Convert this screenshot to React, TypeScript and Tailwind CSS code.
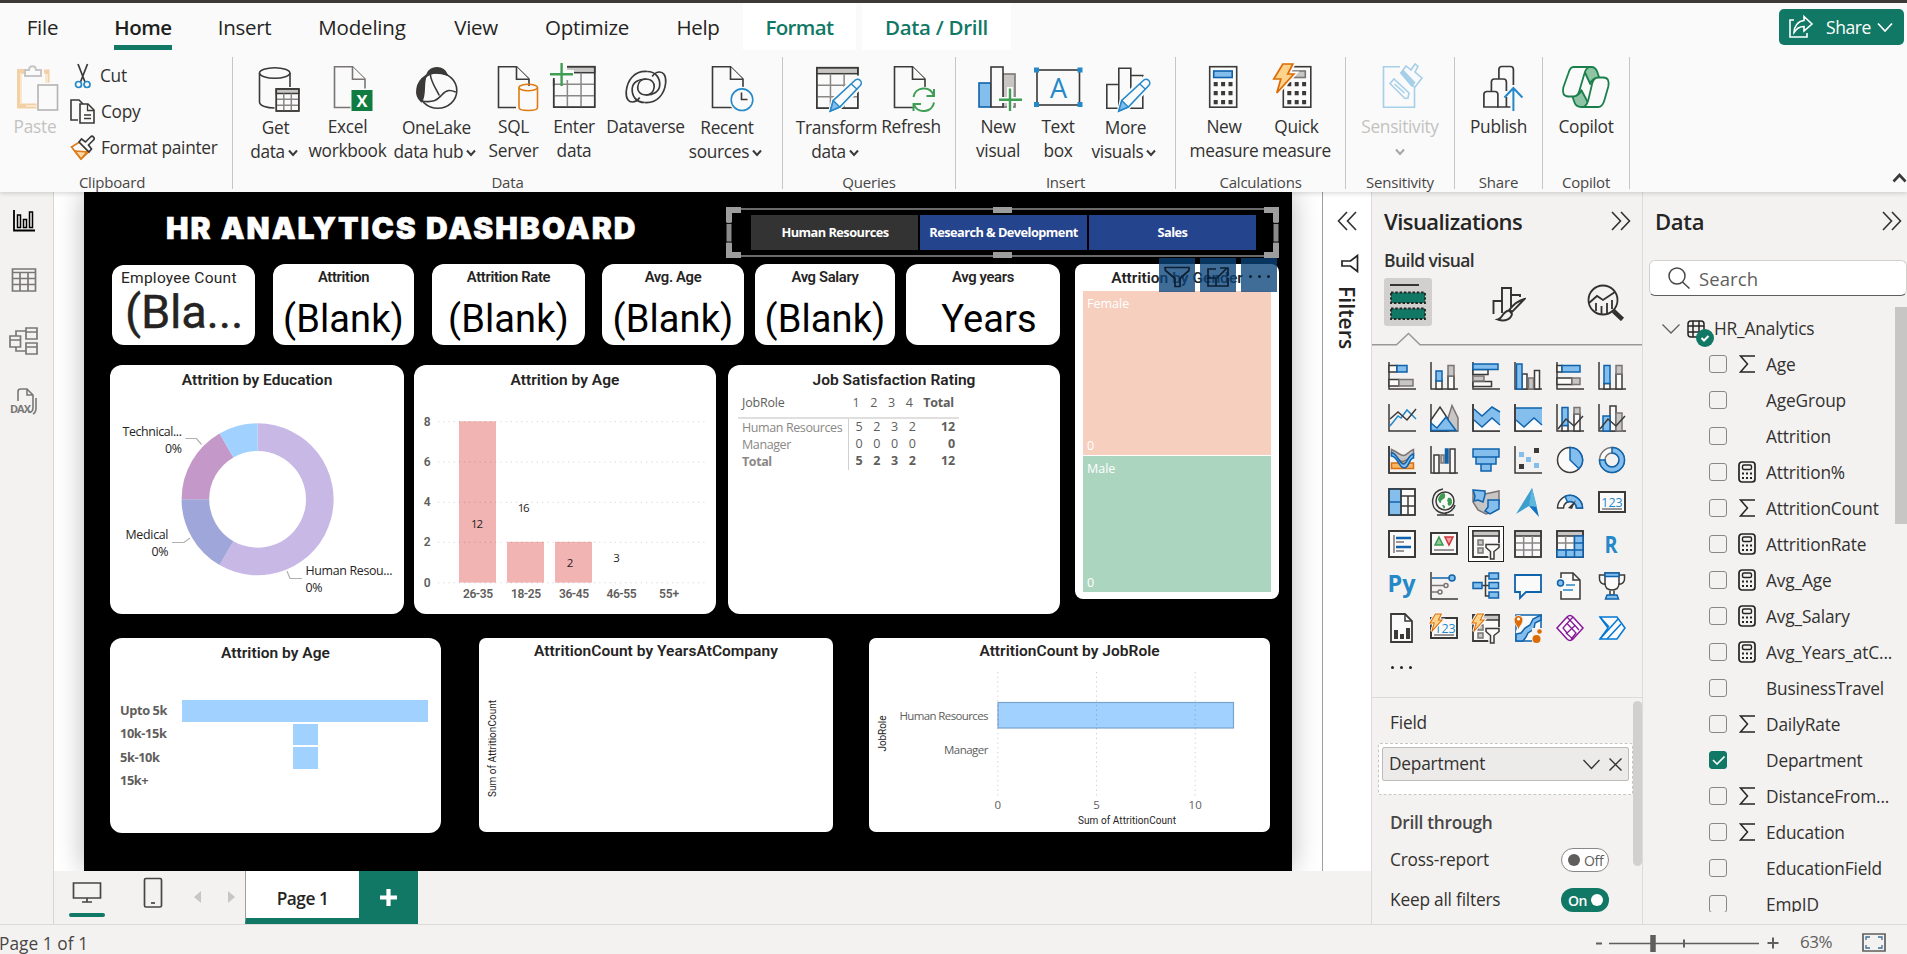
import React from "react";

const K = "#3b3a39";
const G = "#7a7574";
const GF = "#c8c6c4";
const B = "#0f62ac";
const BF = "#83beec";
const GR = "#3f9e54";

/* ---------- shared shapes ---------- */

const Chev = ({ s = "#3b3a39", sw = 2 }: { s?: string; sw?: number }) => (
  <svg width="10" height="8" viewBox="0 0 10 8" fill="none" stroke={s} strokeWidth={sw} className="inline-block">
    <path d="M1 1.5l4 4.5 4-4.5" />
  </svg>
);

const DoubleChev = ({ left }: { left?: boolean }) => (
  <svg width="20" height="20" viewBox="0 0 20 20" fill="none" stroke="#323130" strokeWidth="1.6" className={left ? "rotate-180" : ""}>
    <path d="M1 1l8.5 9L1 19M10 1l8.5 9L10 19" />
  </svg>
);

const DocShape = ({ x, y = 66.7, s = K }: { x: number; y?: number; s?: string }) => (
  <g fill="#fafafa" stroke={s} strokeWidth="1.6">
    <path d={`M${x} ${y}h18l12.5 12.5v28.3h-30.5z`} />
    <path d={`M${x + 18} ${y}v12.5h12.5`} />
  </g>
);

const Grid3 = ({ x, y, w, h, hd, s = "#8a8886" }: { x: number; y: number; w: number; h: number; hd: number; s?: string }) => (
  <g fill="none" strokeWidth="1.5">
    <rect x={x} y={y} width={w} height={h} fill="#fafafa" stroke={K} />
    <rect x={x} y={y} width={w} height={hd} fill={GF} stroke={K} />
    <path
      stroke={s}
      d={`M${x + w / 3} ${y + hd}V${y + h}M${x + (2 * w) / 3} ${y + hd}V${y + h}M${x} ${y + hd + (h - hd) / 3}h${w}M${x} ${y + hd + ((h - hd) * 2) / 3}h${w}`}
    />
    <rect x={x} y={y} width={w} height={h} stroke={K} />
  </g>
);

const Pencil = ({ x }: { x: number }) => (
  <g transform={`translate(${x} 111)`}>
    <path d="M0 0l3-11L24-32a4.3 4.3 0 0 1 7 7L10-4z" fill="#fafafa" stroke="#fafafa" strokeWidth="4" />
    <path d="M0 0l3-10.500L24.500-30.500a3.600 3.600 0 0 1 5.500 5L9.500-4z" fill="#fafafa" stroke="#2488c9" strokeWidth="1.6" />
    <path d="M0 0l3-10.500 6.500 6.500z" fill={BF} stroke="#2488c9" strokeWidth="1.4" />
    <path d="M21-27l6 5.500" stroke="#2488c9" strokeWidth="1.4" />
  </g>
);

const Ico = ({ c, children }: { c: number; children: React.ReactNode }) => (
  <svg width="56" height="52" viewBox={`${c - 28} 61 56 52`} fill="none" strokeWidth="1.6" className="shrink-0">
    {children}
  </svg>
);

/* ---------- ribbon icons ---------- */

const GetDataIcon = (
  <Ico c={275.5}>
    <path d="M259 73v29c0 4 8 6 15 6M289.500 73v14" stroke={K} />
    <ellipse cx="274.2" cy="73" rx="15.2" ry="5.3" stroke={K} />
    <Grid3 x={275.8} y={89} w={22.5} h={22} hd={4.5} />
  </Ico>
);
const ExcelIcon = (
  <Ico c={347.5}>
    <DocShape x={334} s={G} />
    <rect x="350" y="88.500" width="24" height="24" fill="#fafafa" />
    <rect x="351" y="90" width="21" height="21" fill="#107c41" />
    <text x="361.5" y="106.500" textAnchor="middle" fill="#fff" fontSize="16.500" fontWeight="700" fontFamily="Open Sans, sans-serif">X</text>
  </Ico>
);
const OneLakeIcon = (
  <Ico c={436.7}>
    <ellipse cx="437.500" cy="90.500" rx="19" ry="17.800" stroke={K} />
    <path d="M427 74c3-8 16-9 20 1-7-2.500-14-2.500-20-1z" fill={K} stroke={K} />
    <path d="M426 75.500c-11 7-12 20-5 26 5-6 1-18 5-26z" fill={K} stroke={K} />
    <path d="M430 74.500c1 8 5 13 9 21M420.500 101c14 2 16-1 21-6 5-6 9-5 14-3" stroke={K} />
  </Ico>
);
const SqlIcon = (
  <Ico c={514}>
    <DocShape x={498.5} />
    <path d="M516 86h23v27h-23z" fill="#fafafa" />
    <path d="M519 87.500v20c0 4 18.500 4 18.500 0v-20" stroke="#e07b12" />
    <ellipse cx="528.2" cy="87.500" rx="9.300" ry="3.200" stroke="#e07b12" />
  </Ico>
);
const EnterIcon = (
  <Ico c={574}>
    <Grid3 x={553.7} y={66.7} w={41} h={40.5} hd={6} />
    <path d="M550 61h17v17h-17zM561 70h13v10h-13z" fill="#fafafa" />
    <path d="M561.600 63v23M550 74.300h23" stroke={GR} strokeWidth="2.400" />
    <path d="M553.700 80v6" stroke={K} />
  </Ico>
);
const DataverseIcon = (
  <Ico c={645.3}>
    <g stroke={K} strokeWidth="1.700">
      <path d="M644 102.500c13 1 20-9 21-20 .5-8-3-10.500-6-10.500-3 0-5.500 1.500-7.500 4.500" />
      <path d="M646.500 71.500c-13-1-20 9-21 20-.5 8 3 10.500 6 10.500 3 0 5.500-1.500 7.500-4.500" />
      <path d="M646.500 71.500c9 0 13 7 12.500 14-.5 6-6 9.500-13.500 9.500-6 0-9-4-8.500-8 .5-5 4-8 8.500-8" />
      <path d="M644 102.500c-9 0-13-7-12.500-14 .5-6 6-9.500 13.500-9.500 6 0 9 4 8.500 8-.5 5-4 8-8.500 8" />
    </g>
  </Ico>
);
const RecentIcon = (
  <Ico c={727}>
    <DocShape x={712.5} />
    <circle cx="742" cy="99.700" r="13" fill="#fafafa" />
    <circle cx="742" cy="99.700" r="10.800" stroke="#2488c9" fill="#fafafa" />
    <path d="M741.500 92.500v7h6" stroke={K} />
  </Ico>
);
const TransformIcon = (
  <Ico c={836.7}>
    <Grid3 x={816.5} y={67.7} w={41} h={40.5} hd={6} />
    <Pencil x={830} />
  </Ico>
);
const RefreshIcon = (
  <Ico c={911}>
    <DocShape x={894.5} />
    <circle cx="923.700" cy="99.700" r="13" fill="#fafafa" />
    <g stroke={GR} strokeWidth="2">
      <path d="M913.500 97c1.500-10 16-12 20-2M934 89v7h-7.500M934 102.500c-1.500 10-16 12-20 2M913.500 111v-7h7.500" />
    </g>
  </Ico>
);
const NewVisualIcon = (
  <Ico c={998}>
    <rect x="979" y="83" width="12" height="24" fill={BF} stroke={B} />
    <rect x="1003" y="74" width="12" height="33" fill={GF} stroke={G} />
    <rect x="991" y="67" width="12" height="40" fill="#fafafa" stroke={K} />
    <path d="M1007 87h6v10h6v6h-6v10h-6v-10h-8v-6h8z" fill="#fafafa" />
    <path d="M1010 88.500v22.500M999 99.800h23" stroke={GR} strokeWidth="2.400" />
  </Ico>
);
const TextBoxIcon = (
  <Ico c={1058}>
    <rect x="1037" y="70" width="42.500" height="35" stroke={K} />
    <g fill="#2488c9">
      <path d="M1034 67.500h5v5h-5zM1077.500 67.500h5v5h-5zM1034 102h5v5h-5zM1077.500 102h5v5h-5z" />
    </g>
    <text x="1058.500" y="97.500" textAnchor="middle" fill="#2488c9" fontSize="27" fontFamily="Open Sans, sans-serif">A</text>
  </Ico>
);
const MoreVisualsIcon = (
  <Ico c={1125.7}>
    <path d="M1106.500 84.500h12v23.700h-12zM1130.500 75.500h12v32.700h-12zM1118.500 68.200h12v40h-12z" fill="#fafafa" stroke={K} />
    <Pencil x={1118.5} />
  </Ico>
);
const Keys = ({ x }: { x: number }) => (
  <path
    fill={K}
    stroke="none"
    d={[82, 91, 100].map((y) => [0, 7.4, 14.8].map((d) => `M${x + d} ${y}h4v4.2h-4z`).join("")).join("")}
  />
);
const NewMeasureIcon = (
  <Ico c={1224.3}>
    <rect x="1210" y="66.700" width="27" height="40.500" stroke={K} />
    <rect x="1214" y="71" width="18.500" height="6.500" fill={BF} stroke={B} />
    <Keys x={1214} />
  </Ico>
);
const Bolt = ({ x, y, k = 1 }: { x: number; y: number; k?: number }) => (
  <g transform={`translate(${x} ${y}) scale(${k})`}>
    <path d="M9 0h10l-5 10h6L3 29l4-14H0z" fill="#fafafa" stroke="#fafafa" strokeWidth="5" />
    <path d="M9 0h10l-5 10h6L3 29l4-14H0z" fill="#fcd38a" stroke="#dd6b05" strokeWidth="1.700" />
  </g>
);
const QuickMeasureIcon = (
  <Ico c={1296.7}>
    <rect x="1283" y="66.700" width="27.500" height="40.500" stroke={K} />
    <rect x="1290" y="71" width="15" height="6.500" fill={GF} stroke={G} />
    <Keys x={1287} />
    <Bolt x={1273.5} y={64} />
  </Ico>
);
const SensitivityIcon = (
  <Ico c={1400}>
    <g stroke="#a6cfe8">
      <path d="M1400 66.700h-16.500v40.500h31v-20" />
      <path d="M1390 83.500l4-4.500 15 14-1 5-3 .5zM1394.500 84l10 9" />
      <path d="M1401 73l5-7 5 4 4-6 3 2.500-3 5.500 7 6-7 9-4-2z" fill="#fafafa" />
      <path d="M1401 73l2-2.500 11.500 12-2.500 3z" fill="#a6cfe8" />
    </g>
  </Ico>
);
const PublishIcon = (
  <Ico c={1498.6}>
    <g stroke={K} strokeWidth="1.700">
      <path d="M1486 91.500h8.500a3 3 0 0 1 3 3V107H1483.500V94.500a3 3 0 0 1 2.500-3z" />
      <path d="M1491 91V82a3 3 0 0 1 3-3h9a3 3 0 0 1 3 3v9M1498.500 79V69.500a3 3 0 0 1 3-3h8.500a3 3 0 0 1 3 3V85M1497 107h13M1506 97v10" />
    </g>
    <path d="M1513 111V89M1504 97.500l9-9.500 9 9.500" stroke="#2488c9" strokeWidth="2" />
  </Ico>
);
const CopilotIcon = (
  <Ico c={1585.7}>
    <g stroke="#1a7f4b" strokeWidth="1.800" strokeLinejoin="round">
      <path d="M1582 67h9c4 0 5 2 6 5l2 6c-6 0-8 2-9 6z" fill="#8ec3a4" />
      <path d="M1590 107h-9c-4 0-6-2-7-5l-2-6c6 0 8-2 9-6z" fill="#8ec3a4" />
      <path d="M1573 67h16c-3 1-4 3-5 7l-5 17c-1 4-3 5.500-6 5.500h-5c-5 0-6-4-5-9l5-14c1.500-5 3-6.500 5-6.500z" fill="#fafafa" />
      <path d="M1598 107h-15c3-1 4-3 5-7l4-17c1-4 3-5.500 6-5.500h5c5 0 6 4 5 9l-4 14c-1.500 5-3 6.500-6 6.500z" fill="#fafafa" />
    </g>
  </Ico>
);

/* ---------- ribbon ---------- */

type Item = { icon: React.ReactNode; a: string; b?: string; chev?: boolean; w: string; dim?: boolean };

const RibbonItem = ({ it }: { it: Item }) => (
  <div className={`flex shrink-0 flex-col items-center ${it.w}`}>
    {it.icon}
    <div className={`text-center text-[17.3px] leading-[24px] tracking-[-0.3px] whitespace-nowrap ${it.chev && it.b ? "mt-[3px]" : "mt-[2px]"} ${it.dim ? "text-[#c4c2c0]" : "text-[#323130]"}`}>
      <div>{it.a}</div>
      <div className={it.chev && it.b ? "-ml-[3px]" : ""}>
        {it.b}
        {it.chev && (
          <span className={it.b ? "ml-[3px]" : ""}>
            <Chev s={it.dim ? "#a8a6a4" : K} />
          </span>
        )}
      </div>
    </div>
  </div>
);

const GroupLabel = ({ children, cls = "" }: { children: React.ReactNode; cls?: string }) => (
  <div className={`h-[20px] shrink-0 text-center text-[15px] leading-[26px] tracking-[-0.2px] text-[#484644] ${cls}`}>{children}</div>
);

const Group = ({ w, pad, label, items }: { w: string; pad: string; label: string; items: Item[] }) => (
  <div className={`flex h-[132px] shrink-0 flex-col border-r border-[#c8c6c4] ${w}`}>
    <div className={`flex h-[112px] shrink-0 pt-1 ${pad}`}>
      {items.map((it, i) => (
        <RibbonItem key={i} it={it} />
      ))}
    </div>
    <GroupLabel>{label}</GroupLabel>
  </div>
);

const Ribbon = () => (
  <div className="flex pt-[7px]">
    <div className="flex h-[132px] w-[233px] shrink-0 flex-col border-r border-[#c8c6c4]">
      <div className="flex h-[112px] shrink-0">
        <div className="flex w-[70px] flex-col items-center pt-1">
          <svg width="56" height="52" viewBox="8 61 56 52" fill="none" strokeWidth="2">
            <path d="M26 71.500h-5.500v34.500h17" stroke="#f3cfa6" strokeWidth="5" />
            <path d="M45 71.500h3.500v11" stroke="#f3cfa6" strokeWidth="4" />
            <path d="M27 106h10M22 73v31M48 74v8" stroke="#fdeed3" strokeWidth="1.500" />
            <path d="M27 77v-6h4c0-5 7-5 7 0h5v6z" stroke="#c8c6c4" fill="#fafafa" transform="translate(-1 -1)" />
            <rect x="38" y="84" width="21.500" height="27" fill="#fafafa" />
            <rect x="39" y="85" width="19.500" height="25" stroke="#b5b3b1" fill="#fafafa" strokeWidth="1.600" />
          </svg>
          <div className="mt-[2px] text-[17.3px] leading-[24px] tracking-[-0.25px] text-[#c4c2c0]">Paste</div>
        </div>
        <div className="flex flex-col pt-[1px] text-[17.3px] tracking-[-0.3px] text-[#323130]">
          <div className="flex h-[36px] items-center gap-[6px]">
            <svg width="24" height="26" viewBox="0 0 24 26" fill="none" strokeWidth="1.700">
              <path d="M8 1l7 18M17.500 1l-7 18" stroke={K} />
              <circle cx="8.500" cy="21.500" r="3" stroke="#2488c9" />
              <circle cx="17" cy="21.500" r="3" stroke="#2488c9" />
            </svg>
            Cut
          </div>
          <div className="flex h-[36px] items-center gap-[6px]">
            <svg width="25" height="26" viewBox="0 0 25 26" fill="none" stroke={K} strokeWidth="1.600">
              <path d="M8 21H1V1h8l4 4" />
              <path d="M10 5h8l6 6v13H10z" fill="#fafafa" />
              <path d="M17.500 5v6.500H24M14 16h7M14 19.500h7" strokeWidth="1.300" />
            </svg>
            Copy
          </div>
          <div className="flex h-[36px] items-center gap-[6px]">
            <svg width="25" height="26" viewBox="0 0 25 26" fill="none" strokeWidth="1.700">
              <path d="M1.500 12l8-5 9 10-7.500 7z" fill="#fafafa" stroke="#dd7a1a" />
              <path d="M5 16l12 1-6 7z" fill="#fcd9a8" stroke="#dd7a1a" />
              <path d="M9 7l2.500-3 4 3 5-5a2 2 0 0 1 3 3l-5 5 3 4-2.500 3z" fill="#fafafa" stroke={K} />
            </svg>
            Format painter
          </div>
        </div>
      </div>
      <GroupLabel cls="pr-2">Clipboard</GroupLabel>
    </div>
    <Group
      w="w-[550px]"
      pad="pl-[10px]"
      label="Data"
      items={[
        { icon: GetDataIcon, a: "Get", b: "data", chev: true, w: "w-[65px]" },
        { icon: ExcelIcon, a: "Excel", b: "workbook", w: "w-[79px]" },
        { icon: OneLakeIcon, a: "OneLake", b: "data hub", chev: true, w: "w-[99px]" },
        { icon: SqlIcon, a: "SQL", b: "Server", w: "w-[55px]" },
        { icon: EnterIcon, a: "Enter", b: "data", w: "w-[66px]" },
        { icon: DataverseIcon, a: "Dataverse", w: "w-[77px]" },
        { icon: RecentIcon, a: "Recent", b: "sources", chev: true, w: "w-[86px]" },
      ]}
    />
    <Group
      w="w-[173px]"
      pad="pl-[14px]"
      label="Queries"
      items={[
        { icon: TransformIcon, a: "Transform", b: "data", chev: true, w: "w-[79px]" },
        { icon: RefreshIcon, a: "Refresh", w: "w-[70px]" },
      ]}
    />
    <Group
      w="w-[220px]"
      pad="pl-[14px]"
      label="Insert"
      items={[
        { icon: NewVisualIcon, a: "New", b: "visual", w: "w-[56px]" },
        { icon: TextBoxIcon, a: "Text", b: "box", w: "w-[64px]" },
        { icon: MoreVisualsIcon, a: "More", b: "visuals", chev: true, w: "w-[71px]" },
      ]}
    />
    <Group
      w="w-[170px]"
      pad="pl-[12px]"
      label="Calculations"
      items={[
        { icon: NewMeasureIcon, a: "New", b: "measure", w: "w-[72px]" },
        { icon: QuickMeasureIcon, a: "Quick", b: "measure", w: "w-[73px]" },
      ]}
    />
    <Group w="w-[109px]" pad="justify-center" label="Sensitivity" items={[{ icon: SensitivityIcon, a: "Sensitivity", chev: true, w: "w-[90px]", dim: true }]} />
    <Group w="w-[88px]" pad="justify-center" label="Share" items={[{ icon: PublishIcon, a: "Publish", w: "w-[80px]" }]} />
    <Group w="w-[87px]" pad="justify-center" label="Copilot" items={[{ icon: CopilotIcon, a: "Copilot", w: "w-[80px]" }]} />
    <div className="flex h-[132px] flex-1 items-end justify-end pb-[6px]">
      <svg width="15" height="10" viewBox="0 0 15 10" fill="none" stroke={K} strokeWidth="2.600">
        <path d="M1.500 8.500l6-6.500 6 6.500" />
      </svg>
    </div>
  </div>
);

const tabs = [
  { t: "File", w: "ml-[14px] w-[57px] text-[#252423] tracking-[-0.2px]" },
  { t: "Home", w: "ml-[43px] w-[58px] font-semibold text-[#201f1e] tracking-[-0.5px]" },
  { t: "Insert", w: "ml-[35px] w-[75px] text-[#252423] tracking-[-0.3px]" },
  { t: "Modeling", w: "ml-[26px] w-[108px] text-[#252423] tracking-[-0.2px]" },
  { t: "View", w: "ml-[30px] w-[60px] text-[#252423] tracking-[-0.3px]" },
  { t: "Optimize", w: "ml-[31px] w-[100px] text-[#252423] tracking-[-0.3px]" },
  { t: "Help", w: "ml-[31px] w-[60px] text-[#252423] tracking-[-0.3px]" },
  { t: "Format", w: "ml-[15px] w-[113px] bg-white font-semibold text-[#117865] tracking-[-0.6px]" },
  { t: "Data / Drill", w: "ml-[6px] w-[149px] bg-white font-semibold text-[#117865] tracking-[-0.3px]" },
];

const TabBar = () => (
  <div className="flex h-[47px]">
    {tabs.map((x) => (
      <div key={x.t} className={`flex shrink-0 flex-col text-center text-[20.5px] whitespace-nowrap ${x.w}`}>
        <div className="h-[42px] leading-[48px]">{x.t}</div>
        {x.t === "Home" && <div className="h-[5px] bg-[#117865]" />}
      </div>
    ))}
    <div className="mt-[6px] mr-[3px] ml-auto flex h-[36px] w-[125px] items-center rounded-[5px] bg-[#117865] pl-[10px] text-[17.5px] tracking-[-0.4px] text-white">
      <svg width="25" height="24" viewBox="0 0 25 24" fill="none" stroke="#fff" strokeWidth="1.600">
        <path d="M5 5H1v17h17v-4" />
        <path d="M15 1.500l8 7.500-8 7v-4.500c-5 0-7 2-10 6 0-6 4-11.500 10-12z" />
      </svg>
      <span className="ml-[12px] pt-px">Share</span>
      <svg width="16" height="11" viewBox="0 0 16 11" fill="none" stroke="#fff" strokeWidth="1.700" className="ml-[6px]">
        <path d="M1 1.500l7 7.500 7-7.500" />
      </svg>
    </div>
  </div>
);

/* ---------- left navigation ---------- */

const LeftNav = () => (
  <div className="flex w-[54px] shrink-0 flex-col items-center border-r border-[#d8d6d4] bg-[#f3f2f1] pt-[18px] pr-[6px]">
    <svg width="22" height="22" viewBox="0 0 22 22" fill="none" stroke="#000" strokeWidth="1.800">
      <path d="M1 0v20.500h21" />
      <path d="M4.500 5h3v12.500h-3zM10.500 9.500h3v8h-3zM16.500 2h3v15.500h-3z" strokeWidth="1.500" />
    </svg>
    <svg width="26" height="24" viewBox="0 0 26 24" fill="none" stroke="#7a7876" strokeWidth="1.700" className="mt-[36px]">
      <path d="M1.500 1h23v22h-23zM1.500 4.500h23M1.500 10.500h23M1.500 16.500h23M9 4.500V23M17 4.500V23" />
    </svg>
    <svg width="30" height="30" viewBox="0 0 30 30" fill="none" stroke="#7a7876" strokeWidth="1.700" className="mt-[34px]">
      <path d="M1 10h10.500v11H1zM1 14h10.500M17 2h11v11H17zM17 6h11M17 17h11v11H17zM17 21h11M7 10V5h10M7 21v4h10" />
    </svg>
    <svg width="28" height="28" viewBox="0 0 28 28" fill="none" stroke="#7a7876" strokeWidth="1.600" className="mt-[32px]">
      <path d="M8 13V3.500A2.500 2.500 0 0 1 10.500 1H17l6 6v12c0 3-1 5-3 5h-2M17 1v6h6M26 10v10c0 3-1 5-3 6" />
      <text x="0" y="24.500" fontSize="11" fontWeight="700" fill="#7a7876" stroke="none" fontFamily="Open Sans, sans-serif" textLength="21">DAX</text>
    </svg>
  </div>
);

/* ---------- report canvas ---------- */

const din = "font-['Roboto','Open_Sans',sans-serif]";

const CardTitle = ({ children, cls = "" }: { children: React.ReactNode; cls?: string }) => (
  <div className={`${din} text-center text-[15.5px] leading-[20px] font-semibold tracking-[0.03px] whitespace-nowrap text-[#252423] ${cls}`}>{children}</div>
);

const Kpi = ({ w, t, v, cls = "" }: { w: string; t: string; v: string; cls?: string }) => (
  <div className={`${din} h-[81px] shrink-0 rounded-[12px] bg-white text-center ${w}`}>
    <div className="pt-[3px] text-[14.8px] leading-[20px] font-semibold tracking-[-0.35px] text-[#252423]">{t}</div>
    <div className={`mt-[9px] text-[38px] leading-[46px] tracking-[0.1px] text-black ${cls}`}>{v}</div>
  </div>
);

const seg = (a0: number, a1: number) => {
  const p = (r: number, a: number) => {
    const t = ((a - 90) * Math.PI) / 180;
    return `${257.6 + r * Math.cos(t)} ${499.3 + r * Math.sin(t)}`;
  };
  const big = a1 - a0 > 180 ? 1 : 0;
  return `M${p(76, a0)}A76 76 0 ${big} 1 ${p(76, a1)}L${p(48.4, a1)}A48.4 48.4 0 ${big} 0 ${p(48.4, a0)}z`;
};

const EducationChart = () => (
  <svg width="294" height="220" viewBox="110 394 294 220" fontFamily="Open Sans, sans-serif" fontSize="12.400" fill="#252423">
    <path d={seg(0, 210)} fill="#c7b8e6" />
    <path d={seg(210, 270)} fill="#9fa6d9" />
    <path d={seg(270, 330)} fill="#c498c8" />
    <path d={seg(330, 360)} fill="#a0d1ff" />
    <g fill="none" stroke="#b3b0ad" strokeWidth="1.200">
      <path d="M185.500 438.500h11l5 6M172 542.500h12l6-4.500M287 571l3 7.500h12" />
    </g>
    <g textAnchor="end">
      <text x="182" y="436" textLength="59.500">Technical...</text>
      <text x="182" y="453" textLength="17">0%</text>
      <text x="168.500" y="539" textLength="43">Medical</text>
      <text x="168.500" y="556" textLength="17">0%</text>
    </g>
    <text x="305.500" y="575" textLength="87">Human Resou...</text>
    <text x="305.500" y="592" textLength="17">0%</text>
  </svg>
);

const AgeChart = () => (
  <svg width="302" height="220" viewBox="414 394 302 220" fontFamily="Roboto, sans-serif" fontSize="12" fill="#605e5c">
    {[
      [459, 421.3, 161.3],
      [507, 541.8, 40.8],
      [555, 541.8, 40.8],
    ].map(([x, y, h]) => (
      <rect key={x} x={x} y={y} width="37" height={h} fill="#f2b3b3" />
    ))}
    {[421.7, 462, 502.3, 542.3, 582.8].map((y, i) => (
      <g key={y}>
        <path d={`M438 ${y}H706`} stroke="#000" strokeOpacity="0.160" strokeDasharray="1.200 4" />
        <text x="430.500" y={y + 4} textAnchor="end" fontWeight="600">{8 - i * 2}</text>
      </g>
    ))}
    <g textAnchor="middle" fontWeight="600">
      <text x="478" y="598" textLength="30">26-35</text>
      <text x="526" y="598" textLength="30">18-25</text>
      <text x="574" y="598" textLength="30">36-45</text>
      <text x="621.500" y="598" textLength="30">46-55</text>
      <text x="669" y="598" textLength="20">55+</text>
    </g>
    <g textAnchor="middle" fontSize="11.500" fontFamily="Open Sans, sans-serif" fill="#252423">
      <text x="477" y="528" textLength="12">12</text>
      <text x="523.700" y="512.300" textLength="12">16</text>
      <text x="570" y="566.500">2</text>
      <text x="616.500" y="562">3</text>
    </g>
  </svg>
);

const JobRoleChart = () => (
  <svg width="400" height="168" viewBox="869 664 400 168" fontFamily="Open Sans, sans-serif" fontSize="11.500" fill="#605e5c">
    <rect x="998" y="702.500" width="235.500" height="25.500" fill="#a0d1ff" stroke="#7ba4cc" strokeWidth="1.200" />
    {[997.8, 1096.5, 1195.2].map((x, i) => (
      <g key={x}>
        <path d={`M${x} 672V796`} stroke="#000" strokeOpacity="0.200" strokeDasharray="1.200 3.500" />
        <text x={x} y="809" textAnchor="middle">{i * 5}</text>
      </g>
    ))}
    <g textAnchor="end">
      <text x="988.500" y="720" textLength="89">Human Resources</text>
      <text x="988.500" y="754" textLength="44.500">Manager</text>
    </g>
    <g fontFamily="Roboto, sans-serif" fontSize="10" fill="#252423" textAnchor="middle">
      <text x="1127" y="824" textLength="98">Sum of AttritionCount</text>
      <text transform="translate(885.500 733.500) rotate(-90)" textLength="36">JobRole</text>
    </g>
  </svg>
);

const Slicer = () => (
  <div className="relative mt-[15px] ml-[91px] flex h-[51px] w-[553px] items-start gap-[2px] pt-[8px] pl-[25px] font-['Open_Sans',sans-serif] text-[12.8px] font-bold tracking-[-0.55px] text-white">
    <div className="flex h-[35px] w-[167px] items-center justify-center bg-[#333333] pl-px">Human Resources</div>
    <div className="flex h-[35px] w-[167px] items-center justify-center bg-[#25448e]">Research &amp; Development</div>
    <div className="flex h-[35px] w-[167px] items-center justify-center bg-[#25448e]">Sales</div>
    <svg width="553" height="51" viewBox="0 0 553 51" fill="none" className="absolute top-0 left-0">
      <path d="M3 2h547v47H3z" stroke="#6a6a6a" strokeWidth="2" />
      <path d="M15 3H3v12M538 3h12v12M15 48H3V36M538 48h12V36" stroke="#9d9d9d" strokeWidth="6" />
      <path d="M3 15v21M550 15v21" stroke="#8a8a8a" strokeWidth="5" />
      <path d="M267 3h19M267 48h19" stroke="#9d9d9d" strokeWidth="6" />
      <path d="M0 16.500h6M0 35h6M547 16.500h6M547 35h6" stroke="#111" strokeWidth="1.200" />
    </svg>
    <div className="absolute top-[51px] left-[433px] flex gap-[5px]">
      <div className="flex h-[34px] w-[36px] items-center justify-center bg-[#0a447b]/78 pt-[3px]">
        <svg width="26" height="22" viewBox="0 0 26 22" fill="none" stroke="#0c1f33" strokeWidth="1.700">
          <path d="M1 1.500h24v3l-9 8v8l-5 0v-8l-9.500-8z" />
        </svg>
      </div>
      <div className="flex h-[34px] w-[36px] items-center justify-center bg-[#0a447b]/78 pt-[4px]">
        <svg width="24" height="22" viewBox="0 0 24 22" fill="none" stroke="#0c1f33" strokeWidth="1.700">
          <path d="M10 3H2v17h20v-8M2 12h8v8M11 12L21 2M14 2h8v8" />
        </svg>
      </div>
      <div className="flex h-[34px] w-[36px] items-center justify-center gap-[6px] bg-[#0a447b]/78 pt-[2px]">
        <span className="size-[3px] rounded-full bg-[#0c1f33]" />
        <span className="size-[3px] rounded-full bg-[#0c1f33]" />
        <span className="size-[3px] rounded-full bg-[#0c1f33]" />
      </div>
    </div>
  </div>
);

const Nums = ({ v, t, bold }: { v: string[]; t: string; bold?: boolean }) => (
  <>
    {v.map((n, i) => (
      <span key={i} className={`w-[17.8px] text-center ${bold ? "font-bold" : ""}`}>{n}</span>
    ))}
    <span className="ml-auto font-bold">{t}</span>
  </>
);

const JobMatrix = () => (
  <div className="ml-[10px] w-[221px] text-[12.5px] tracking-[-0.2px] text-[#605e5c]">
    <div className="flex h-[27px] items-center border-b-2 border-[#e1dfdd] pr-[5px] pb-[3px] pl-[4px]">
      <span className="w-[105px] text-[#605e5c]">JobRole</span>
      <Nums v={["1", "2", "3", "4"]} t="Total" />
    </div>
    {[
      ["Human Resources", "5", "2", "3", "2", "12"],
      ["Manager", "0", "0", "0", "0", "0"],
      ["Total", "5", "2", "3", "2", "12"],
    ].map((r) => (
      <div key={r[0]} className="flex h-[17px] items-center pr-[4px] pl-[4px]">
        <span className={`mr-[1px] h-[17px] w-[107px] border-r border-[#d2d0ce] leading-[17px] tracking-[-0.4px] whitespace-nowrap text-[#8a8886] ${r[0] === "Total" ? "font-bold" : ""}`}>{r[0]}</span>
        <Nums v={r.slice(1, 5)} t={r[5]} bold={r[0] === "Total"} />
      </div>
    ))}
  </div>
);

const Report = () => (
  <div className="flex h-[679px] w-[1208px] shrink-0 flex-col overflow-hidden bg-black shadow-[0_0_26px_rgba(0,0,0,0.28)]">
    <div className="flex h-[72px]">
      <div className="w-[552px] pt-[14px] pl-[82px] font-['Inter','Liberation_Sans',sans-serif] text-[30px] leading-[44px] font-black tracking-[2.05px] whitespace-nowrap text-white [-webkit-text-stroke:0.6px_white]">HR ANALYTICS DASHBOARD</div>
      <div className="relative z-10 -ml-px">
        <Slicer />
      </div>
    </div>
    <div className="flex h-[374px]">
      <div className="flex w-[991px] flex-col">
        <div className="flex pl-[28px]">
          <div className={`${din} mt-px h-[80px] w-[143px] rounded-[12px] bg-white text-[#252423]`}>
            <div className="pt-[3px] pl-[9px] text-[15.5px] leading-[20px] tracking-[0.25px]">Employee Count</div>
            <div className="mt-px pl-[13px] text-[47px] leading-[46px] tracking-[-0.2px] [-webkit-text-stroke:0.4px_#252423]">(Bla...</div>
          </div>
          <Kpi w="ml-[18px] w-[141px]" t="Attrition" v="(Blank)" />
          <Kpi w="ml-[18px] w-[153px]" t="Attrition Rate" v="(Blank)" />
          <Kpi w="ml-[17px] w-[142px]" t="Avg. Age" v="(Blank)" />
          <Kpi w="ml-[11px] w-[140px]" t="Avg Salary" v="(Blank)" />
          <Kpi w="ml-[11px] w-[154px]" t="Avg years" v="Years" cls="pl-[12px]" />
        </div>
        <div className="mt-[20px] flex pl-[26px]">
          <div className="h-[249px] w-[294px] rounded-[12px] bg-white">
            <CardTitle cls="h-[29px] pt-[5px]">Attrition by Education</CardTitle>
            <EducationChart />
          </div>
          <div className="ml-[10px] h-[249px] w-[302px] rounded-[12px] bg-white">
            <CardTitle cls="h-[29px] pt-[5px]">Attrition by Age</CardTitle>
            <AgeChart />
          </div>
          <div className="ml-[12px] h-[249px] w-[332px] rounded-[12px] bg-white">
            <CardTitle cls="h-[27px] pt-[5px]">Job Satisfaction Rating</CardTitle>
            <JobMatrix />
          </div>
        </div>
      </div>
      <div className="h-[335px] w-[204px] rounded-[8px] bg-white px-[8px]">
        <CardTitle cls="h-[27px] pt-[4px]">Attrition by Gender</CardTitle>
        <div className="flex h-[164px] flex-col justify-between bg-[#f6cfbf] px-[4px] pb-px text-[12.5px] leading-[16px] text-white">
          <span className="pt-[5px]">Female</span>
          <span>0</span>
        </div>
        <div className="mt-px flex h-[136px] flex-col justify-between bg-[#acd5c0] px-[4px] pb-px text-[12.5px] leading-[16px] text-white">
          <span className="pt-[5px]">Male</span>
          <span>0</span>
        </div>
      </div>
    </div>
    <div className="flex pl-[26px]">
      <div className="h-[195px] w-[331px] rounded-[12px] bg-white">
        <CardTitle cls="h-[62px] pt-[5px]">Attrition by Age</CardTitle>
        {[
          ["Upto 5k", "w-[246px]"],
          ["10k-15k", "w-[25px]"],
          ["5k-10k", "w-[25px]"],
          ["15k+", "w-0"],
        ].map(([t, w]) => (
          <div key={t} className="mb-[2px] flex h-[21.5px] items-center pl-[10px]">
            <span className="w-[62px] pb-[2px] text-[12.8px] leading-[16px] font-bold tracking-[-0.4px] text-[#605e5c]">{t}</span>
            <div className="flex w-[246px] justify-center">
              <div className={`h-[21.5px] bg-[#a0d1ff] ${w}`} />
            </div>
          </div>
        ))}
      </div>
      <div className="ml-[38px] h-[194px] w-[354px] rounded-[7px] bg-white">
        <CardTitle cls="h-[26px] pt-[3px]">AttritionCount by YearsAtCompany</CardTitle>
        <svg width="354" height="168" viewBox="479 664 354 168" fontFamily="Roboto, sans-serif" fontSize="10" fill="#252423">
          <text transform="translate(495.500 748.500) rotate(-90)" textAnchor="middle" textLength="97">Sum of AttritionCount</text>
        </svg>
      </div>
      <div className="ml-[36px] h-[194px] w-[401px] rounded-[7px] bg-white">
        <CardTitle cls="h-[26px] pt-[3px]">AttritionCount by JobRole</CardTitle>
        <JobRoleChart />
      </div>
    </div>
  </div>
);

const PageTabs = () => (
  <div className="flex h-[53px] bg-[#f3f2f1]">
    <div className="ml-[15px] flex w-[36px] flex-col items-center pt-[10px]">
      <svg width="30" height="23" viewBox="0 0 30 23" fill="none" stroke="#484644" strokeWidth="1.700">
        <path d="M1.500 2h27v15h-27zM15 17v4M10 21h10" />
      </svg>
      <div className="mt-[9px] h-[4px] w-[36px] rounded-full bg-[#117865]" />
    </div>
    <svg width="20" height="32" viewBox="0 0 20 32" fill="none" stroke="#484644" strokeWidth="1.700" className="mt-[6px] ml-[38px]">
      <rect x="1.500" y="1.500" width="17" height="28.500" rx="1.500" />
      <path d="M8 26h4" />
    </svg>
    <svg width="8" height="12" viewBox="0 0 8 12" fill="#c8c6c4" className="mt-[20px] ml-[31px]"><path d="M7 0v12L0 6z" /></svg>
    <svg width="8" height="12" viewBox="0 0 8 12" fill="#c8c6c4" className="mt-[20px] ml-[26px]"><path d="M0 0v12l7-6z" /></svg>
    <div className="ml-[9px] h-[53px] w-[114px] border-b-[6px] border-l border-b-[#117865] border-l-[#a19f9d] bg-white text-center text-[17.3px] leading-[56px] font-semibold tracking-[-0.5px] text-[#252423]">Page 1</div>
    <div className="flex h-[53px] w-[59px] items-center justify-center bg-[#117865]">
      <svg width="17" height="17" viewBox="0 0 17 17" stroke="#fff" strokeWidth="4.200"><path d="M8.500 0v17M0 8.500h17" /></svg>
    </div>
  </div>
);

/* ---------- visual gallery icons (28 x 28) ---------- */

const axis = <path d="M1 0v27h27" stroke={K} />;
const W = "#fafafa";

const gallery: React.ReactNode[] = [
  <>{axis}<path d="M1 3.500h8v6.500H1zM1 17.500h10v6.500H1z" fill={W} stroke={K} /><path d="M9 3.500h10v6.500H9z" fill={BF} stroke={B} /><path d="M11 17.500h14v6.500H11z" fill={GF} stroke={G} /></>,
  <>{axis}<path d="M6 18.500h6V27H6zM18 14h6v13h-6z" fill={W} stroke={K} /><path d="M6 9h6v10H6z" fill={BF} stroke={B} /><path d="M18 3.500h6V14h-6z" fill={GF} stroke={G} /></>,
  <>{axis}<path d="M1 7.500h15v5H1zM1 19.500h18.500v5H1z" fill={W} stroke={K} /><path d="M1 14h11v5H1z" fill={GF} stroke={G} /><path d="M1 2h25v5.500H1z" fill={BF} stroke={B} /></>,
  <>{axis}<path d="M8 12h5v15H8zM20.500 8.500h5V27h-5z" fill={W} stroke={K} /><path d="M14.500 16h5v11h-5z" fill={GF} stroke={G} /><path d="M2.500 2H8v25H2.500z" fill={BF} stroke={B} /></>,
  <>{axis}<path d="M1 3.500h5v6.500H1zM1 16h15v6.500H1z" fill={W} stroke={K} /><path d="M6 3.500h18v6.500H6z" fill={BF} stroke={B} /><path d="M16 16h8v6.500h-8z" fill={GF} stroke={G} /></>,
  <>{axis}<path d="M6 21.500h6V27H6zM18 12h6v15h-6z" fill={W} stroke={K} /><path d="M6 3.500h6v18H6z" fill={BF} stroke={B} /><path d="M18 3.500h6V12h-6z" fill={GF} stroke={G} /></>,

  <>{axis}<path d="M2 22l8-10 3 2 6-8 9 9" stroke="#2488c9" /><path d="M2 15l8-7 9 8 9-11" stroke={K} /></>,
  <>{axis}<path d="M14 27L22 1.500 28 14v13z" fill={GF} stroke={G} /><path d="M1 16L10 3l8 12v12H1z" fill={W} stroke={K} /><path d="M1 19l6 5 9-11 10 13.500H1z" fill={BF} stroke={B} /></>,
  <>{axis}<path d="M2 5l8 7 10-9 8 5v12l-8-6-10 9-8-7z" fill={BF} stroke="none" /><path d="M2 16l8 7 10-9 8 7v6H2z" fill={W} /><path d="M2 5l8 7 10-9 8 5M2 16l8 7 10-9 8 7" stroke={B} />{axis}</>,
  <>{axis}<path d="M2 16l8 7 10-9 8 7v6H2z" fill={W} /><path d="M2 4h26v17l-8-7-10 9-8-7z" fill={BF} /><path d="M2 4h26M2 16l8 7 10-9 8 7" stroke={B} />{axis}</>,
  <>{axis}<path d="M6 21.500h6V27H6zM18 10h6v17h-6z" fill={W} stroke={K} /><path d="M6 3.500h6v18H6z" fill={BF} stroke={B} /><path d="M18 3.500h6V10h-6z" fill={GF} stroke={G} /><path d="M2 25l8-10 8 7 9-10" stroke={K} /></>,
  <>{axis}<path d="M12 2h6v25h-6z" fill={W} stroke={K} /><path d="M5 12h7v15H5z" fill={BF} stroke={B} /><path d="M18 9h6v18h-6z" fill={GF} stroke={G} /><path d="M2 25l8-10 8 7 9-10" stroke={K} /></>,

  <>{axis}<path d="M3.500 17h22v5.500h-22z" fill="#fcb565" stroke="#d9700f" /><path d="M3.500 3.500c8 4 9 6 12 6s5-4 10-6v6c-4 2-7 6-11 6s-6-5-11-6z" fill={GF} stroke={G} /><path d="M3.500 10c7 1 7 12 12.500 12S21 12 25.500 12V8c-6 1-6 10-10 10S9 7 3.500 6.500z" fill={BF} stroke={B} />{axis}</>,
  <>{axis}<path d="M4 9h5v18H4zM20 3h5v24h-5z" fill={W} stroke={K} /><path d="M11 9h3v8h-3z" fill={GF} stroke={G} /><path d="M15.500 3h2.500v14h-2.500z" fill={B} stroke={B} /></>,
  <path d="M1 3h26v8H1zM4 11h20v7H4zM9 18h10v7H9z" fill={BF} stroke={B} />,
  <>{axis}<path d="M20 2h5v5h-5zM5 18h5v5H5z" fill={K} /><path d="M5 6h5v5H5zM12 11h5v5h-5zM20 17h5v5h-5z" fill={BF} /></>,
  <><circle cx="14" cy="14" r="12.500" fill={W} stroke={K} /><path d="M14 1.500a12.500 12.500 0 0 1 9 21.200L14 14z" fill={BF} stroke={B} /></>,
  <><circle cx="14" cy="14" r="9.700" stroke={G} strokeWidth="7" /><circle cx="14" cy="14" r="9.700" stroke={W} strokeWidth="4" /><path d="M14 1.500A12.500 12.500 0 1 1 1.500 14H7a7 7 0 1 0 7-7z" fill={BF} stroke={B} /></>,

  <><path d="M1 1h26v26H1z" fill={W} stroke={K} /><path d="M1 1h12v26H1z" fill={BF} stroke={B} /><path d="M1 14h12" stroke={B} /><path d="M13 8h14M20 8v19M13 18h7M20 18h7M13 1v26" stroke={K} /><path d="M1 1h26v26H1z" stroke={K} /></>,
  <><circle cx="15" cy="13" r="9" fill={W} stroke={K} /><path d="M13 1C1 3-1 19 9 24c6 3 14 0 16-7M16 24v3M7 27h17" stroke={K} /><path d="M10 7c4-4 6-1 5 2s-4 2-4 5-3-1-3-3zM18 10c3-1 4 1 4 4s-3 5-4 3 1-3-1-4zM12 17c3 0 4 2 2 4z" fill="#3d9a50" /></>,
  <><path d="M1 4l12 2 14-3v13l-6 8-7 2-8-4-5-8z" fill={GF} stroke={G} /><path d="M1 2l12 1v4l-2 7-5-2-4 1 1-5z" fill={BF} stroke={B} /><path d="M27 12v9l-9 5-5-3 3-4V12z" fill={BF} stroke={B} /></>,
  <><path d="M18 0L2 26l13-8z" fill="#3c9fcd" /><path d="M18 0l7 29-10-11z" fill="#1272c4" /><path d="M18 0l5 19-8-1z" fill="#5cb8dd" /></>,
  <><path d="M1.500 20a12.500 12.500 0 0 1 25 0h-6a6.500 6.500 0 0 0-13 0z" fill={W} stroke={K} /><path d="M9 8.500A12.500 12.500 0 0 1 26.500 20h-6a6.500 6.500 0 0 0-9-6z" fill={BF} stroke={B} /><path d="M12 20l8-8-4 9z" fill={K} /></>,
  <><path d="M1 4h26v20H1z" fill={W} stroke={K} strokeWidth="2" /><text x="14" y="18.500" textAnchor="middle" fontSize="12.500" fill="#2488c9" fontFamily="Open Sans, sans-serif">123</text><path d="M4 21h20" stroke={G} /></>,

  <><path d="M1 1h26v26H1z" fill={W} stroke={K} strokeWidth="2" /><path d="M6 5v18" stroke={G} /><path d="M8 8h15M8 17h15" stroke={B} strokeWidth="2.400" /><path d="M8 12h8M8 21h8" stroke={G} /></>,
  <><path d="M1 3h26v21H1z" fill={W} stroke={K} strokeWidth="2" /><path d="M9 7l4 8H5z" fill="#8fc99b" stroke="#3d9a50" /><path d="M15 7h8l-4 8z" fill="#f6a1a6" stroke="#d13438" /><path d="M4 20h20" stroke={G} /></>,
  <><path d="M1 1h26v26H1z" fill={W} stroke={K} strokeWidth="1.800" /><path d="M1 1h26v5H1z" fill={GF} stroke={K} /><path d="M6 10h5v5H6zM6 18h5v5H6z" fill={GF} stroke={G} /><path d="M13 13h17v17H17z" fill="#f3f2f1" /><path d="M14 14.500h13v3l-5 4V29h-3.500v-7.500L14 17.500z" fill={W} stroke={K} /></>,
  <Grid3 x={1} y={1} w={26} h={26} hd={5} />,
  <><Grid3 x={1} y={1} w={26} h={26} hd={5} /><path d="M18.500 6H27v21H1v-7h17.500z" fill={BF} stroke={B} /><path d="M18.500 20H27M18.500 20v7M10 20v7M18.500 13H27" stroke={B} /></>,
  <text x="13" y="22.500" textAnchor="middle" fontSize="24" fontWeight="700" fill="#2488c9" fontFamily="Open Sans, sans-serif" textLength="13" lengthAdjust="spacingAndGlyphs">R</text>,

  <text x="13.500" y="20" textAnchor="middle" fontSize="24" fontWeight="700" fill="#2488c9" fontFamily="Open Sans, sans-serif" textLength="28" lengthAdjust="spacingAndGlyphs">Py</text>,
  <>{axis}<path d="M2 6h17" stroke={B} /><circle cx="22" cy="6" r="3" fill={BF} stroke={B} /><path d="M2 13.500h12M2 20h6" stroke={G} /><circle cx="16" cy="13.500" r="2" stroke={G} /><circle cx="10" cy="20" r="2" stroke={G} /></>,
  <><path d="M10 13.500h7M13.500 13.500V4H17M13.500 13v11H17" stroke={K} /><path d="M1 10.500h9v6H1zM17 1h9.500v6H17zM17 10.500h9.500v6H17zM17 20h9.500v6H17z" fill={BF} stroke={B} /></>,
  <path d="M1 3h26v17H12l-6 6v-6H1z" fill={W} stroke={B} strokeWidth="1.800" />,
  <><path d="M5 6V1h12l7 7v19H5v-8" fill={W} stroke={K} /><path d="M17 1v7h7" stroke={K} /><circle cx="4.500" cy="11" r="3" fill={BF} stroke={B} /><path d="M10 13h9M7 18h10" stroke="#2488c9" /></>,
  <><path d="M7 3H1.500v4c0 3 2 5 6 5.500M21 3h5.500v4c0 3-2 5-6 5.500M7 1h14v10c0 5-3 7-7 7s-7-2-7-7zM12 18h4v5h-4z" fill={W} stroke={K} /><path d="M7 1h14v3.500H7zM9 23h10l1.500 4h-13z" fill={BF} stroke={B} /></>,

  <><path d="M3 0h14l7 7v21H3z" fill={W} stroke={K} strokeWidth="1.800" /><path d="M17 0v7h7" stroke={K} /><path d="M6 16h4v9H6zM12 20h4v5h-4zM18 14h4v11h-4z" fill={K} /></>,
  <><path d="M1 4h26v20H1z" fill={W} stroke={K} strokeWidth="2" /><text x="15" y="19" textAnchor="middle" fontSize="12.500" fill="#2488c9" fontFamily="Open Sans, sans-serif">123</text><path d="M4 21h20" stroke={G} /><Bolt x={0} y={0} k={0.6} /></>,
  <><path d="M1 1h26v26H1z" fill={W} stroke={K} strokeWidth="1.800" /><path d="M1 1h26v5H1z" fill={GF} stroke={K} /><path d="M6 11h5v5H6zM6 19h5v5H6z" fill={GF} stroke={G} /><path d="M13 13h17v17H17z" fill="#f3f2f1" /><path d="M14 14.500h13v3l-5 4V29h-3.500v-7.500L14 17.500z" fill={W} stroke={K} /><Bolt x={0} y={0} k={0.6} /></>,
  <><path d="M2 1h25v26H2z" fill={W} stroke={B} /><path d="M10 2h9l-1 6-5 3-1 6-5 3-1 6H2v-9z" fill={W} /><path d="M27 1v5l-6 3-1 6-6 4-2 4-3 4H2v-7l5-1 4-5 5-3 3-6z" fill={BF} stroke={B} /><path d="M0 6a4.500 4.500 0 0 1 9 0c0 4-3 5-4.500 10C3 11 0 10 0 6z" fill="#dd6b05" stroke="#f3f2f1" strokeWidth="1" /><circle cx="4.500" cy="5" r="1.600" fill="#fff" /><path d="M18 14h11v16H18z" fill="#f3f2f1" /><circle cx="22.500" cy="25" r="4" fill="#dd6b05" /><circle cx="25.500" cy="17.500" r="2.300" fill="#dd6b05" /></>,
  <><path d="M1 14L11 3q3-3 6 0l10 11-10 11q-3 3-6 0z" fill={W} stroke="#881798" /><path d="M17 3l-6 6.500 9 9.500-5 6.500M11 3l8 8.500-8.500 8L17 25M11 9.500L7 14l4 5M19 11.500l4 4.500" stroke="#881798" strokeWidth="1.300" /></>,
  <><path d="M2 3h17l8 11-8 11H2l8-11z" fill={W} stroke="#0078d4" /><path d="M2 25L20 5M9 25l14-15M2 3l9 10" stroke="#0078d4" /></>,
];

const VisualizationsPane = () => (
  <div className="flex w-[271px] shrink-0 flex-col border-r border-[#dddbd9] bg-[#f3f2f1]">
    <div className="flex h-[58px] items-center justify-between pr-[11px] pl-[12px]">
      <span className="text-[22px] font-semibold tracking-[-0.55px] text-[#252423]">Visualizations</span>
      <DoubleChev />
    </div>
    <div className="mt-px h-[27px] pl-[12px] text-[17.5px] leading-[18px] font-semibold tracking-[-0.55px] text-[#323130]">Build visual</div>
    <div className="flex h-[48px] items-center pl-[12px]">
      <div className="flex h-[48px] w-[48px] items-center justify-center rounded-[3px] bg-[#d2d0ce]">
        <svg width="36" height="38" viewBox="0 0 36 38" fill="none" stroke="#252423">
          <path d="M0 2h29" strokeWidth="1.800" />
          <rect x="1" y="9.500" width="34" height="10.500" fill="#117865" strokeWidth="1.800" strokeDasharray="2.500 1.800" />
          <rect x="1" y="25.500" width="34" height="10.500" fill="#117865" strokeWidth="1.800" strokeDasharray="2.500 1.800" />
        </svg>
      </div>
      <svg width="34" height="36" viewBox="0 0 34 36" fill="none" stroke="#323130" strokeWidth="1.900" className="mt-[3px] ml-[60px]">
        <path d="M1.500 28V15h8.500v12M10 15V2h9v20M19 9h9v2" />
        <path d="M32.500 13L20 26l-2.500-2.500c4-5 9-9 15-10.500zM17 24.500l3 3.500c-1 5-7 8-14 5.500 5-1 4-8 11-9z" fill="#f3f2f1" />
      </svg>
      <svg width="38" height="38" viewBox="0 0 38 38" fill="none" stroke="#323130" strokeWidth="1.800" className="ml-[61px]">
        <circle cx="16" cy="17" r="14.500" />
        <path d="M2 20l8-7 6 4 12-8M9 20v8M14.500 23v8M20 20v10M25 17v9" />
        <path d="M26.500 28l9 8.500" strokeWidth="4.500" />
      </svg>
    </div>
    <svg width="270" height="14" viewBox="0 0 270 14" fill="none" stroke="#9a9896" strokeWidth="1.500" className="mt-[6px] shrink-0">
      <path d="M0 12.800h24.500L36.500 1.500l11.500 11.300H270" />
    </svg>
    <div className="mt-[9px] ml-[9px] grid w-[252px] shrink-0 grid-cols-6 self-start">
      {gallery.map((g, i) => (
        <div key={i} className="flex h-[42px] w-[42px] items-center justify-center">
          <div className={i === 26 ? "border-[1.5px] border-[#201f1e] bg-white p-[3px]" : ""}>
            <svg width="28" height="28" viewBox="0 0 28 28" fill="none" strokeWidth="1.500" className="overflow-visible">{g}</svg>
          </div>
        </div>
      ))}
    </div>
    <div className="mt-[17px] ml-[19px] flex h-[3px] shrink-0 gap-[6px]">
      <span className="size-[3px] rounded-full bg-[#252423]" />
      <span className="size-[3px] rounded-full bg-[#252423]" />
      <span className="size-[3px] rounded-full bg-[#252423]" />
    </div>
    <div className="mt-[28px] flex flex-1 justify-between overflow-hidden border-t border-[#dddbd9]">
      <div className="flex w-[262px] flex-col pl-[6px] text-[17.3px] tracking-[-0.2px] text-[#323130]">
        <div className="h-[45px] pt-[12px] pl-[12px] leading-[26px]">Field</div>
        <div className="h-[52px] w-[255px] shrink-0 rounded-[2px] border border-dashed border-[#c8c6c4] bg-white p-[3px]">
          <div className="flex h-[34px] items-center rounded-[2px] border border-[#bebbb8] bg-[#edebe9] pr-[6px] pl-[6px]">
            <span className="flex-1">Department</span>
            <svg width="17" height="11" viewBox="0 0 17 11" fill="none" stroke="#323130" strokeWidth="1.300"><path d="M.5 1l8 8.500 8-8.500" /></svg>
            <svg width="13" height="13" viewBox="0 0 13 13" fill="none" stroke="#323130" strokeWidth="1.400" className="ml-[9px]"><path d="M.5.5l12 12M12.500.5l-12 12" /></svg>
          </div>
        </div>
        <div className="mt-[15px] pl-[12px] leading-[26px] font-semibold tracking-[-0.3px] text-[#484644]">Drill through</div>
        <div className="mt-[10px] flex h-[28px] items-center justify-between pr-[24px] pl-[12px]">
          Cross-report
          <div className="flex h-[24px] w-[48px] items-center rounded-full border border-[#8a8886] bg-white pl-[6px] text-[14px] tracking-[-0.3px] text-[#605e5c]">
            <span className="mr-[4px] size-[12px] rounded-full bg-[#605e5c]" />
            Off
          </div>
        </div>
        <div className="mt-[12px] flex h-[28px] items-center justify-between pr-[24px] pl-[12px]">
          Keep all filters
          <div className="flex h-[24px] w-[48px] items-center rounded-full bg-[#117865] pl-[7px] text-[14px] font-semibold tracking-[-0.6px] text-white">
            On
            <span className="ml-[4px] size-[12px] rounded-full bg-white" />
          </div>
        </div>
      </div>
      <div className="mt-[3px] h-[165px] w-[9px] rounded-full bg-[#d2d0ce]" />
    </div>
  </div>
);

/* ---------- data pane ---------- */

const Sigma = () => (
  <svg width="17" height="18" viewBox="0 0 17 18" fill="none" stroke="#252423" strokeWidth="1.500">
    <path d="M16 1H1.500l7 8-7 8H16" />
  </svg>
);

const Calc = () => (
  <svg width="18" height="22" viewBox="0 0 18 22" fill="none" stroke="#252423" strokeWidth="1.700">
    <rect x="1" y="1" width="16" height="20" rx="3" />
    <rect x="4.500" y="4" width="9" height="4.500" rx="1.500" strokeWidth="1.400" />
    <path d="M4 12.500h2M8 12.500h2M12 12.500h2M4 17h2M8 17h2M12 17h2" strokeWidth="2.200" />
  </svg>
);

const fields: [string, "" | "s" | "c", boolean?][] = [
  ["Age", "s"],
  ["AgeGroup", ""],
  ["Attrition", ""],
  ["Attrition%", "c"],
  ["AttritionCount", "s"],
  ["AttritionRate", "c"],
  ["Avg_Age", "c"],
  ["Avg_Salary", "c"],
  ["Avg_Years_atC...", "c"],
  ["BusinessTravel", ""],
  ["DailyRate", "s"],
  ["Department", "", true],
  ["DistanceFrom...", "s"],
  ["Education", "s"],
  ["EducationField", ""],
  ["EmpID", ""],
];

const DataPane = () => (
  <div className="flex flex-1 flex-col bg-[#f3f2f1]">
    <div className="flex h-[58px] items-center justify-between pr-[5px] pl-[12px]">
      <span className="text-[22px] font-semibold tracking-[-0.3px] text-[#252423]">Data</span>
      <DoubleChev />
    </div>
    <div className="mt-[10px] ml-[6px] flex h-[36px] w-[258px] items-center rounded-[6px] border border-[#d2d0ce] border-b-[#605e5c] bg-white pl-[18px] text-[18.5px] tracking-[0.1px] text-[#605e5c]">
      <svg width="22" height="22" viewBox="0 0 22 22" fill="none" stroke="#484644" strokeWidth="1.500"><circle cx="9" cy="9" r="8" /><path d="M14.500 15l7 6.500" /></svg>
      <span className="ml-[9px] pt-px">Search</span>
    </div>
    <div className="mt-[11px] flex h-[605px] justify-between overflow-hidden">
      <div className="text-[17.3px] tracking-[-0.15px] text-[#323130]">
        <div className="mt-[2px] flex h-[37px] items-center pt-[3px] pl-[19px]">
          <svg width="18" height="10" viewBox="0 0 18 10" fill="none" stroke="#605e5c" strokeWidth="1.300"><path d="M.5.500l8.500 8.500L17.500.500" /></svg>
          <div className="relative ml-[7px] h-[18px] w-[18px]">
            <svg width="18" height="18" viewBox="0 0 18 18" fill="none" stroke="#252423" strokeWidth="1.500"><rect x="1" y="1" width="16" height="16" rx="3" /><path d="M1 6h16M1 12h16M6 1v16M12 1v16" /></svg>
            <svg width="18" height="18" viewBox="0 0 18 18" className="absolute top-[9px] left-[9px]"><circle cx="9" cy="9" r="9" fill="#117865" /><path d="M5.500 9l2.500 2.500 4.500-4.500" fill="none" stroke="#fff" strokeWidth="2" /></svg>
          </div>
          <span className="ml-[9px]">HR_Analytics</span>
        </div>
        {fields.map(([t, k, on]) => (
          <div key={t} className="flex h-[36px] items-center pl-[66px]">
            <div className={`flex size-[18px] items-center justify-center rounded-[3px] border-[1.5px] ${on ? "border-[#117865] bg-[#117865]" : "border-[#8a8886]"}`}>
              {on && <svg width="13" height="9" viewBox="0 0 13 9" fill="none" stroke="#fff" strokeWidth="1.600"><path d="M1 4l4 4 7.500-7.500" /></svg>}
            </div>
            <div className="ml-[11px] flex w-[18px] justify-center">{k === "s" ? <Sigma /> : k === "c" ? <Calc /> : null}</div>
            <span className="ml-[10px] pt-[2px] whitespace-nowrap">{t}</span>
          </div>
        ))}
      </div>
      <div className="h-[217px] w-[12px] bg-[#c8c6c4]" />
    </div>
  </div>
);

const StatusBar = () => (
  <div className="flex h-[30px] items-center border-t border-[#dddbd9] bg-[#f3f2f1] text-[17.3px] tracking-[0.05px] text-[#484644]">
    <span className="-ml-px pt-[8px]">Page 1 of 1</span>
    <svg width="184" height="20" viewBox="1595 932 184 20" fill="none" stroke="#605e5c" className="mt-[6px] ml-auto">
      <path d="M1596 942.500h6M1767.500 942h11M1773 936.500v11" strokeWidth="2" />
      <path d="M1609 942.500h150" strokeWidth="1.400" />
      <path d="M1653 934v17" strokeWidth="5.500" />
      <path d="M1684 938.500v8" strokeWidth="2" />
    </svg>
    <span className="ml-[21px] pt-[5px] text-[17px] tracking-[-0.5px] text-[#605e5c]">63%</span>
    <svg width="24" height="19" viewBox="0 0 24 19" fill="none" stroke="#605e5c" strokeWidth="1.700" className="mt-[6px] mr-[21px] ml-[30px]">
      <path d="M1 1h22v17H1z" />
      <path d="M4 7V4h4M16 4h4v3M20 12v3h-4M8 15H4v-3" strokeWidth="1.300" stroke="#3f6f99" />
    </svg>
  </div>
);

export default function App() {
  return (
    <div className="flex h-[954px] w-[1907px] flex-col overflow-hidden bg-[#f3f2f1] font-['Open_Sans','Noto_Sans',sans-serif]">
      <header className="relative z-20 h-[192px] shrink-0 border-t-[3px] border-[#3b3a39] bg-[#fafafa] shadow-[0_1px_5px_rgba(0,0,0,0.18)]">
        <TabBar />
        <Ribbon />
      </header>
      <main className="flex h-[732px] shrink-0">
        <LeftNav />
        <div className="flex w-[1318px] shrink-0 flex-col border-r border-[#dddbd9]">
          <div className="flex h-[679px] overflow-hidden bg-white">
            <div className="flex w-[1269px] shrink-0 overflow-hidden border-r border-[#a19f9d] pl-[30px]">
              <Report />
            </div>
            <div className="flex flex-1 flex-col items-center pt-[19px]">
              <DoubleChev left />
              <svg width="18" height="19" viewBox="0 0 18 19" fill="none" stroke="#252423" strokeWidth="1.700" className="mt-[23px] ml-[5px]">
                <path d="M16.500 1.500v16L9.500 12H1V7h8.500z" />
              </svg>
              <div className="mt-[13px] text-[21px] leading-[24px] font-semibold tracking-[0.1px] text-[#252423] [writing-mode:vertical-rl]">Filters</div>
            </div>
          </div>
          <PageTabs />
        </div>
        <VisualizationsPane />
        <DataPane />
      </main>
      <StatusBar />
    </div>
  );
}
